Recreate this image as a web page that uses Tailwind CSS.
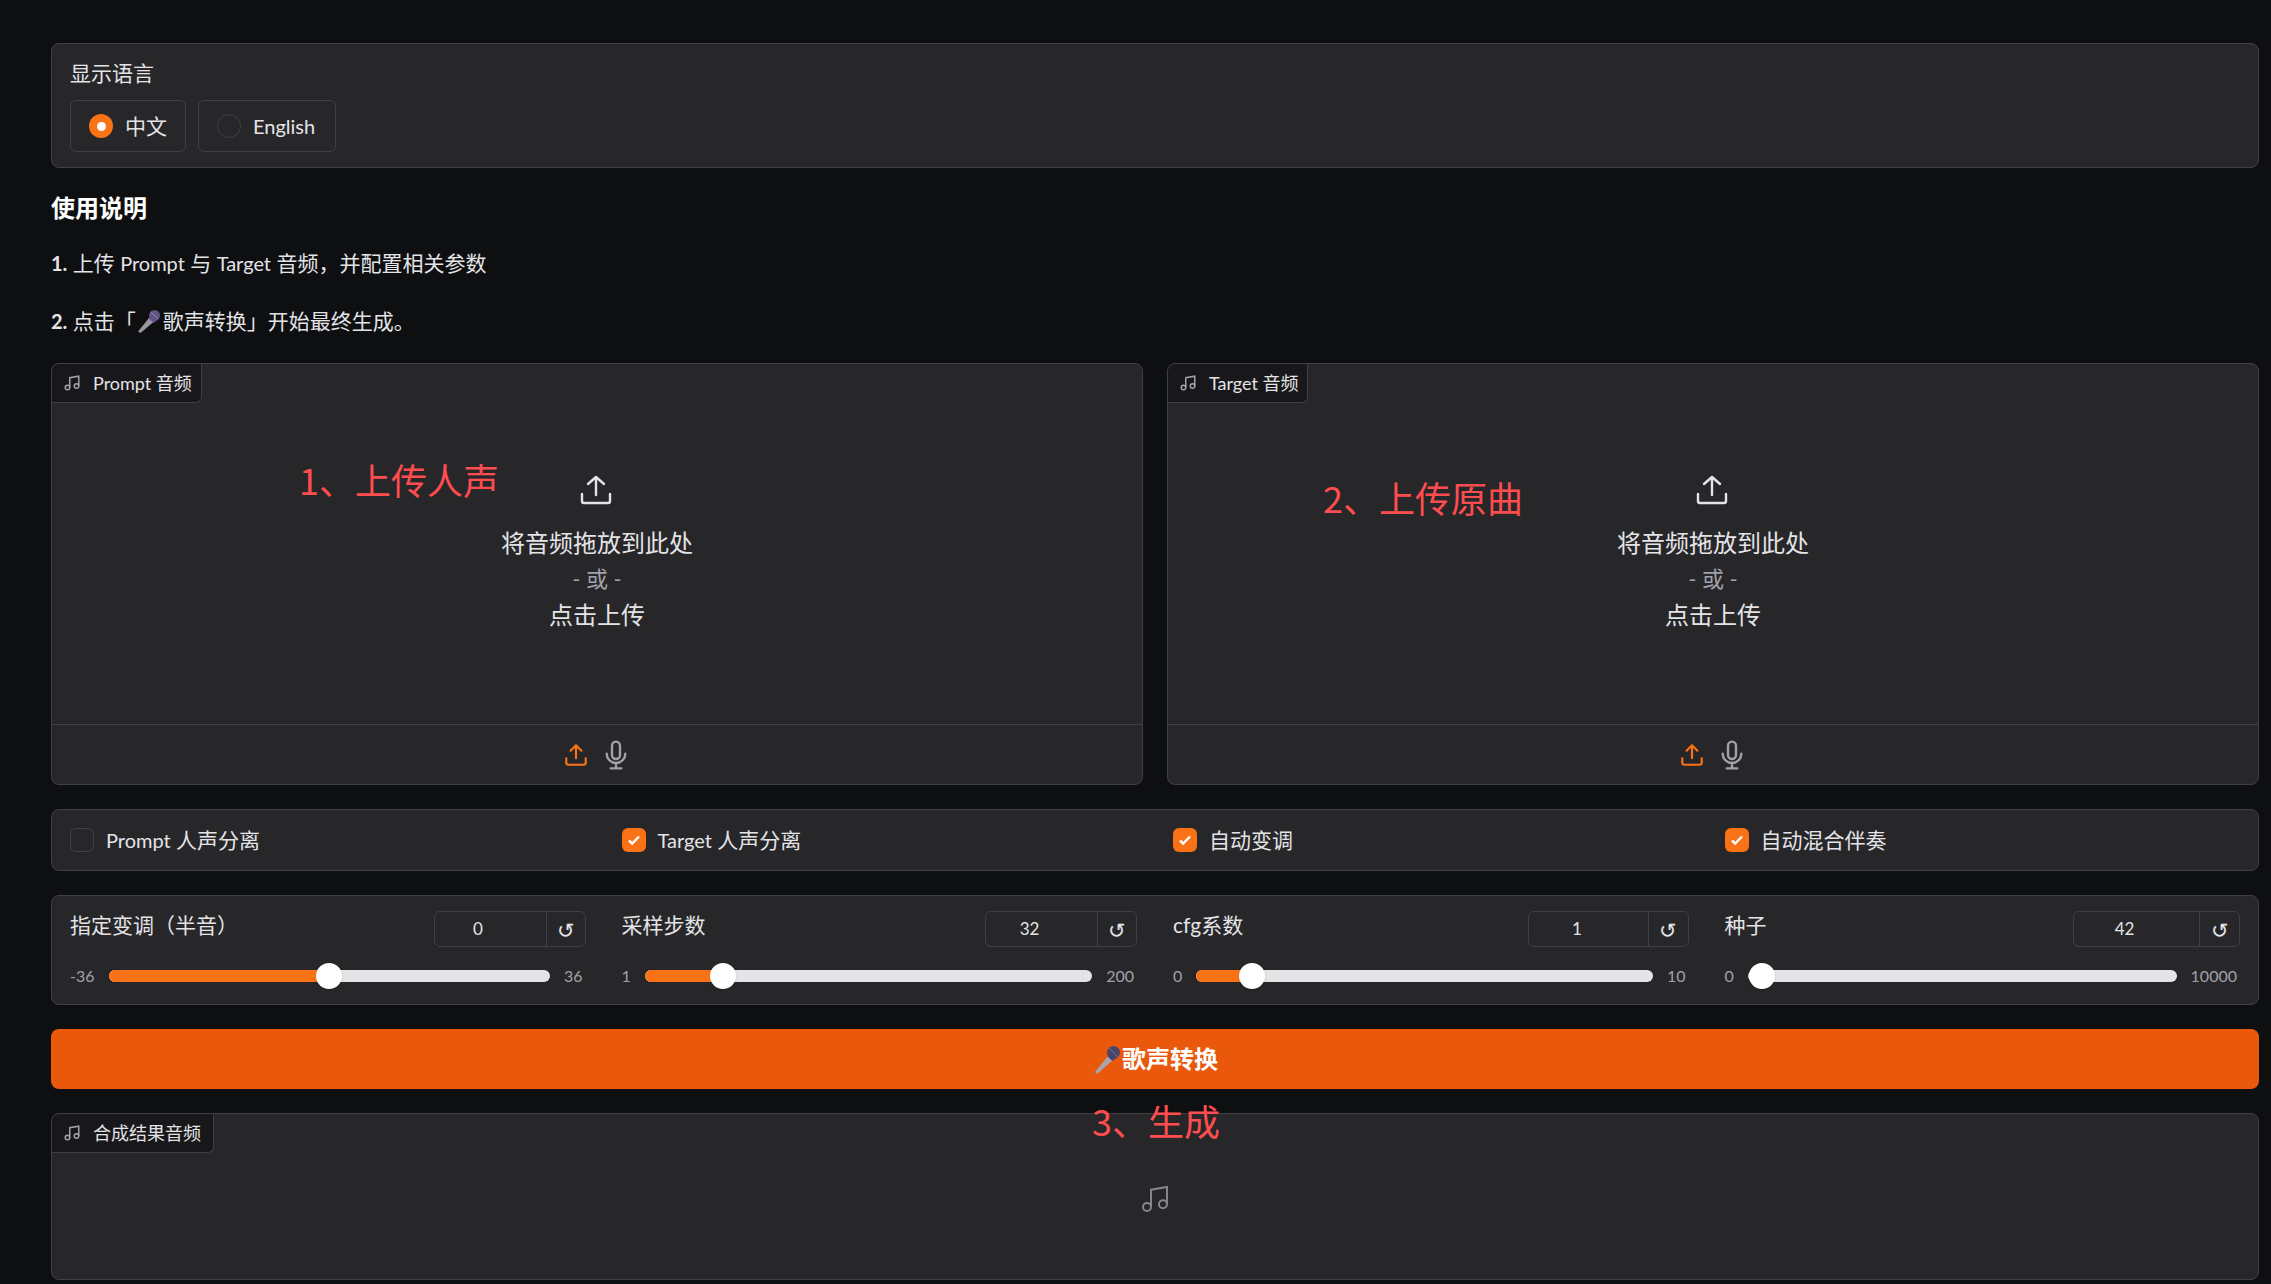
<!DOCTYPE html>
<html lang="zh"><head><meta charset="utf-8">
<script src="https://cdn.jsdelivr.net/npm/@tailwindcss/browser@4"></script>
<title>歌声转换</title></head>
<body class="bg-[#0e0f11] h-[1284px] overflow-hidden text-[#e4e4e7] font-['Lato','Noto_Sans_CJK_SC',sans-serif]">
<main class="relative flex flex-col pl-[51px] pr-[12px] pt-[43px]">

<section class="h-[125px] rounded-lg border border-[#3f3f46] bg-[#27272a] px-[18px] pt-[14px]">
  <div class="text-[21px] leading-[30px]">显示语言</div>
  <div class="flex gap-[12px] mt-[12px]">
    <label class="flex items-center h-[52px] w-[116px] rounded-md border border-[#3f3f46] px-[18px] gap-[12px]">
      <span class="flex items-center justify-center size-[24px] rounded-full bg-[#f97316]"><span class="size-[9px] rounded-full bg-white"></span></span>
      <span class="text-[21px]">中文</span>
    </label>
    <label class="flex items-center h-[52px] w-[138px] rounded-md border border-[#3f3f46] px-[18px] gap-[12px]">
      <span class="size-[24px] rounded-full border border-[#3f3f46] bg-[#27272a]"></span>
      <span class="text-[20px]">English</span>
    </label>
  </div>
</section>

<h2 class="mt-[23px] text-[24px] leading-[34px] font-bold text-white">使用说明</h2>
<p class="mt-[22px] text-[21px] leading-[32px]"><b class="text-[20px]">1.</b> 上传 <span class="text-[20px]">Prompt</span> 与 <span class="text-[20px]">Target</span> 音频，并配置相关参数</p>
<p class="mt-[26px] text-[21px] leading-[32px] flex items-center"><b class="text-[20px]">2.</b>&nbsp;点击「<svg class="w-[27px] h-[24px]" viewBox="0 0 27 24"><path d="M2 22.5 L13 9 L17.5 13 L4.5 24Z" fill="#9b979f"/><path d="M12.5 9.5 L15 7 L20 12 L17.5 14Z" fill="#7b4bb0"/><circle cx="18.5" cy="6.5" r="5.5" fill="#5f5580"/><path d="M15 3 L22 10" stroke="#8d84ad" stroke-width="1"/></svg>歌声转换」开始最终生成。</p>

<div class="grid grid-cols-2 gap-[24px] mt-[26px]">
  <section class="relative h-[422px] rounded-lg border border-[#3f3f46] bg-[#27272a] flex flex-col">
    <div class="absolute left-0 top-0 flex items-center h-[39px] w-[150px] rounded-br-md rounded-tl-lg border-r border-b border-[#3f3f46] bg-[#18181b] pl-[11px] gap-[12px] text-[18px]">
      <svg class="size-[18px] text-[#a1a1aa]" viewBox="0 0 24 24" fill="none" stroke="currentColor" stroke-width="2"><path d="M9 18V5l12-2v13"/><circle cx="6" cy="18" r="3"/><circle cx="18" cy="16" r="3"/></svg>
      <span>Prompt 音频</span>
    </div>
    <div class="flex-1 flex flex-col items-center pt-[110px]">
      <svg class="size-[32px] -translate-x-[1px] text-[#e4e4e7]" viewBox="0 0 32 32" fill="none" stroke="currentColor" stroke-width="2.4" stroke-linecap="round" stroke-linejoin="round"><path d="M16 21V3M8 10l8-7 8 7"/><path d="M2 20v7a2 2 0 0 0 2 2h24a2 2 0 0 0 2-2v-7"/></svg>
      <div class="mt-[19px] text-[24px] leading-[36px]">将音频拖放到此处</div>
      <div class="text-[22px] leading-[36px] text-[#a1a1aa]">- 或 -</div>
      <div class="text-[24px] leading-[36px]">点击上传</div>
    </div>
    <div class="h-[60px] border-t border-[#3f3f46] flex items-center justify-center gap-[11px]">
      <svg class="size-[26px] text-[#f97316]" viewBox="0 0 24 24" fill="none" stroke="currentColor" stroke-width="2" stroke-linecap="round" stroke-linejoin="round"><path d="M12 15V3M7 8l5-5 5 5"/><path d="M3 15v4a2 2 0 0 0 2 2h14a2 2 0 0 0 2-2v-4"/></svg>
      <svg class="size-[32px] text-[#a1a1aa]" viewBox="0 0 24 24" fill="none" stroke="currentColor" stroke-width="1.8" stroke-linecap="round"><rect x="9" y="2" width="6" height="13" rx="3"/><path d="M5 11a7 7 0 0 0 14 0M12 18v4M8 22h8"/></svg>
    </div>
  </section>
  <section class="relative h-[422px] rounded-lg border border-[#3f3f46] bg-[#27272a] flex flex-col">
    <div class="absolute left-0 top-0 flex items-center h-[39px] w-[140px] rounded-br-md rounded-tl-lg border-r border-b border-[#3f3f46] bg-[#18181b] pl-[11px] gap-[12px] text-[18px]">
      <svg class="size-[18px] text-[#a1a1aa]" viewBox="0 0 24 24" fill="none" stroke="currentColor" stroke-width="2"><path d="M9 18V5l12-2v13"/><circle cx="6" cy="18" r="3"/><circle cx="18" cy="16" r="3"/></svg>
      <span>Target 音频</span>
    </div>
    <div class="flex-1 flex flex-col items-center pt-[110px]">
      <svg class="size-[32px] -translate-x-[1px] text-[#e4e4e7]" viewBox="0 0 32 32" fill="none" stroke="currentColor" stroke-width="2.4" stroke-linecap="round" stroke-linejoin="round"><path d="M16 21V3M8 10l8-7 8 7"/><path d="M2 20v7a2 2 0 0 0 2 2h24a2 2 0 0 0 2-2v-7"/></svg>
      <div class="mt-[19px] text-[24px] leading-[36px]">将音频拖放到此处</div>
      <div class="text-[22px] leading-[36px] text-[#a1a1aa]">- 或 -</div>
      <div class="text-[24px] leading-[36px]">点击上传</div>
    </div>
    <div class="h-[60px] border-t border-[#3f3f46] flex items-center justify-center gap-[11px]">
      <svg class="size-[26px] text-[#f97316]" viewBox="0 0 24 24" fill="none" stroke="currentColor" stroke-width="2" stroke-linecap="round" stroke-linejoin="round"><path d="M12 15V3M7 8l5-5 5 5"/><path d="M3 15v4a2 2 0 0 0 2 2h14a2 2 0 0 0 2-2v-4"/></svg>
      <svg class="size-[32px] text-[#a1a1aa]" viewBox="0 0 24 24" fill="none" stroke="currentColor" stroke-width="1.8" stroke-linecap="round"><rect x="9" y="2" width="6" height="13" rx="3"/><path d="M5 11a7 7 0 0 0 14 0M12 18v4M8 22h8"/></svg>
    </div>
  </section>
</div>

<section class="mt-[24px] h-[62px] rounded-lg border border-[#3f3f46] bg-[#27272a] px-[18px] pb-[1px] grid grid-cols-4 gap-[36px] items-center text-[21px]">
  <label class="flex items-center gap-[12px]"><span class="size-[24px] rounded-md border border-[#3f3f46] bg-[#27272a]"></span><span><span class="text-[20px]">Prompt</span> 人声分离</span></label>
  <label class="flex items-center gap-[12px]"><span class="flex items-center justify-center size-[24px] rounded-md bg-[#f97316]"><svg class="size-[16px]" viewBox="0 0 16 16" fill="none" stroke="#fff" stroke-width="2.4"><path d="M3 8.5l3.2 3L13 4.5"/></svg></span><span><span class="text-[20px]">Target</span> 人声分离</span></label>
  <label class="flex items-center gap-[12px]"><span class="flex items-center justify-center size-[24px] rounded-md bg-[#f97316]"><svg class="size-[16px]" viewBox="0 0 16 16" fill="none" stroke="#fff" stroke-width="2.4"><path d="M3 8.5l3.2 3L13 4.5"/></svg></span>自动变调</label>
  <label class="flex items-center gap-[12px]"><span class="flex items-center justify-center size-[24px] rounded-md bg-[#f97316]"><svg class="size-[16px]" viewBox="0 0 16 16" fill="none" stroke="#fff" stroke-width="2.4"><path d="M3 8.5l3.2 3L13 4.5"/></svg></span>自动混合伴奏</label>
</section>

<section class="mt-[24px] h-[110px] rounded-lg border border-[#3f3f46] bg-[#27272a] px-[18px] pt-[15px] grid grid-cols-4 gap-[36px]">
  <div>
    <div class="flex justify-between h-[36px]"><span class="text-[21px] leading-[28px]">指定变调（半音）</span>
      <div class="flex w-[152px] rounded-md border border-[#3f3f46] text-[17px]"><span class="flex-1 flex items-center justify-center pr-[24px]">0</span><span class="w-[39px] border-l border-[#3f3f46] flex items-center justify-center text-[21px] leading-none">↺</span></div></div>
    <div class="flex items-center gap-[14px] mt-[17px] pr-[3px] text-[16px] text-[#a1a1aa]"><span class="w-[25px]">-36</span><div class="relative flex-1 h-[12px] rounded-full bg-[#e4e4e7]"><div class="h-full w-[220px] rounded-full bg-[#f97316]"></div><span class="absolute left-[207px] top-[-7px] size-[26px] rounded-full bg-white shadow"></span></div><span>36</span></div>
  </div>
  <div>
    <div class="flex justify-between h-[36px]"><span class="text-[21px] leading-[28px]">采样步数</span>
      <div class="flex w-[152px] rounded-md border border-[#3f3f46] text-[17px]"><span class="flex-1 flex items-center justify-center pr-[24px]">32</span><span class="w-[39px] border-l border-[#3f3f46] flex items-center justify-center text-[21px] leading-none">↺</span></div></div>
    <div class="flex items-center gap-[14px] mt-[17px] pr-[3px] text-[16px] text-[#a1a1aa]"><span class="w-[9px]">1</span><div class="relative flex-1 h-[12px] rounded-full bg-[#e4e4e7]"><div class="h-full w-[78px] rounded-full bg-[#f97316]"></div><span class="absolute left-[65px] top-[-7px] size-[26px] rounded-full bg-white shadow"></span></div><span>200</span></div>
  </div>
  <div>
    <div class="flex justify-between h-[36px]"><span class="text-[21px] leading-[28px]">cfg系数</span>
      <div class="flex w-[161px] rounded-md border border-[#3f3f46] text-[17px]"><span class="flex-1 flex items-center justify-center pr-[22px]">1</span><span class="w-[40px] border-l border-[#3f3f46] flex items-center justify-center text-[21px] leading-none">↺</span></div></div>
    <div class="flex items-center gap-[14px] mt-[17px] pr-[3px] text-[16px] text-[#a1a1aa]"><span class="w-[9px]">0</span><div class="relative flex-1 h-[12px] rounded-full bg-[#e4e4e7]"><div class="h-full w-[55px] rounded-full bg-[#f97316]"></div><span class="absolute left-[43px] top-[-7px] size-[26px] rounded-full bg-white shadow"></span></div><span>10</span></div>
  </div>
  <div>
    <div class="flex justify-between h-[36px]"><span class="text-[21px] leading-[28px]">种子</span>
      <div class="flex w-[167px] rounded-md border border-[#3f3f46] text-[17px]"><span class="flex-1 flex items-center justify-center pr-[24px]">42</span><span class="w-[40px] border-l border-[#3f3f46] flex items-center justify-center text-[21px] leading-none">↺</span></div></div>
    <div class="flex items-center gap-[14px] mt-[17px] pr-[3px] text-[16px] text-[#a1a1aa]"><span class="w-[9px]">0</span><div class="relative flex-1 h-[12px] rounded-full bg-[#e4e4e7]"><span class="absolute left-[1px] top-[-7px] size-[26px] rounded-full bg-white shadow"></span></div><span>10000</span></div>
  </div>
</section>

<button class="mt-[24px] h-[60px] rounded-lg bg-[#ea580c] text-white text-[24px] font-bold flex items-center justify-center"><svg class="w-[30px] h-[30px]" viewBox="0 0 30 30"><path d="M3 28 L16 12 L21 16 L5 30Z" fill="#a8a6ac"/><path d="M15.5 12.5 L18.5 9.5 L23.5 14.5 L20.5 17Z" fill="#4a3a8a"/><circle cx="21.5" cy="8.5" r="6.5" fill="#4a4668"/><path d="M17 4 L26 13" stroke="#77728f" stroke-width="1"/></svg>歌声转换</button>

<section class="relative mt-[24px] h-[167px] rounded-lg border border-[#3f3f46] bg-[#27272a] flex items-center justify-center">
  <div class="absolute left-0 top-0 flex items-center h-[39px] w-[162px] rounded-br-md rounded-tl-lg border-r border-b border-[#3f3f46] bg-[#18181b] pl-[11px] gap-[12px] text-[18px]">
    <svg class="size-[18px] text-[#a1a1aa]" viewBox="0 0 24 24" fill="none" stroke="currentColor" stroke-width="2"><path d="M9 18V5l12-2v13"/><circle cx="6" cy="18" r="3"/><circle cx="18" cy="16" r="3"/></svg>
    <span>合成结果音频</span>
  </div>
  <svg class="size-[32px] mt-[4px] text-[#85858c]" viewBox="0 0 24 24" fill="none" stroke="currentColor" stroke-width="1.5"><path d="M9 18V5l12-2v13"/><circle cx="6" cy="18" r="3"/><circle cx="18" cy="16" r="3"/></svg>
</section>

<span class="absolute left-[299px] top-[453px] text-[36px] leading-[52px] text-[#ff4d4f] font-['Noto_Sans_CJK_SC',sans-serif]">1、上传人声</span>
<span class="absolute left-[1323px] top-[471px] text-[36px] leading-[52px] text-[#ff4d4f] font-['Noto_Sans_CJK_SC',sans-serif]">2、上传原曲</span>
<span class="absolute left-[1092px] top-[1094px] text-[36px] leading-[52px] text-[#ff4d4f] font-['Noto_Sans_CJK_SC',sans-serif]">3、生成</span>
</main>
</body></html>
